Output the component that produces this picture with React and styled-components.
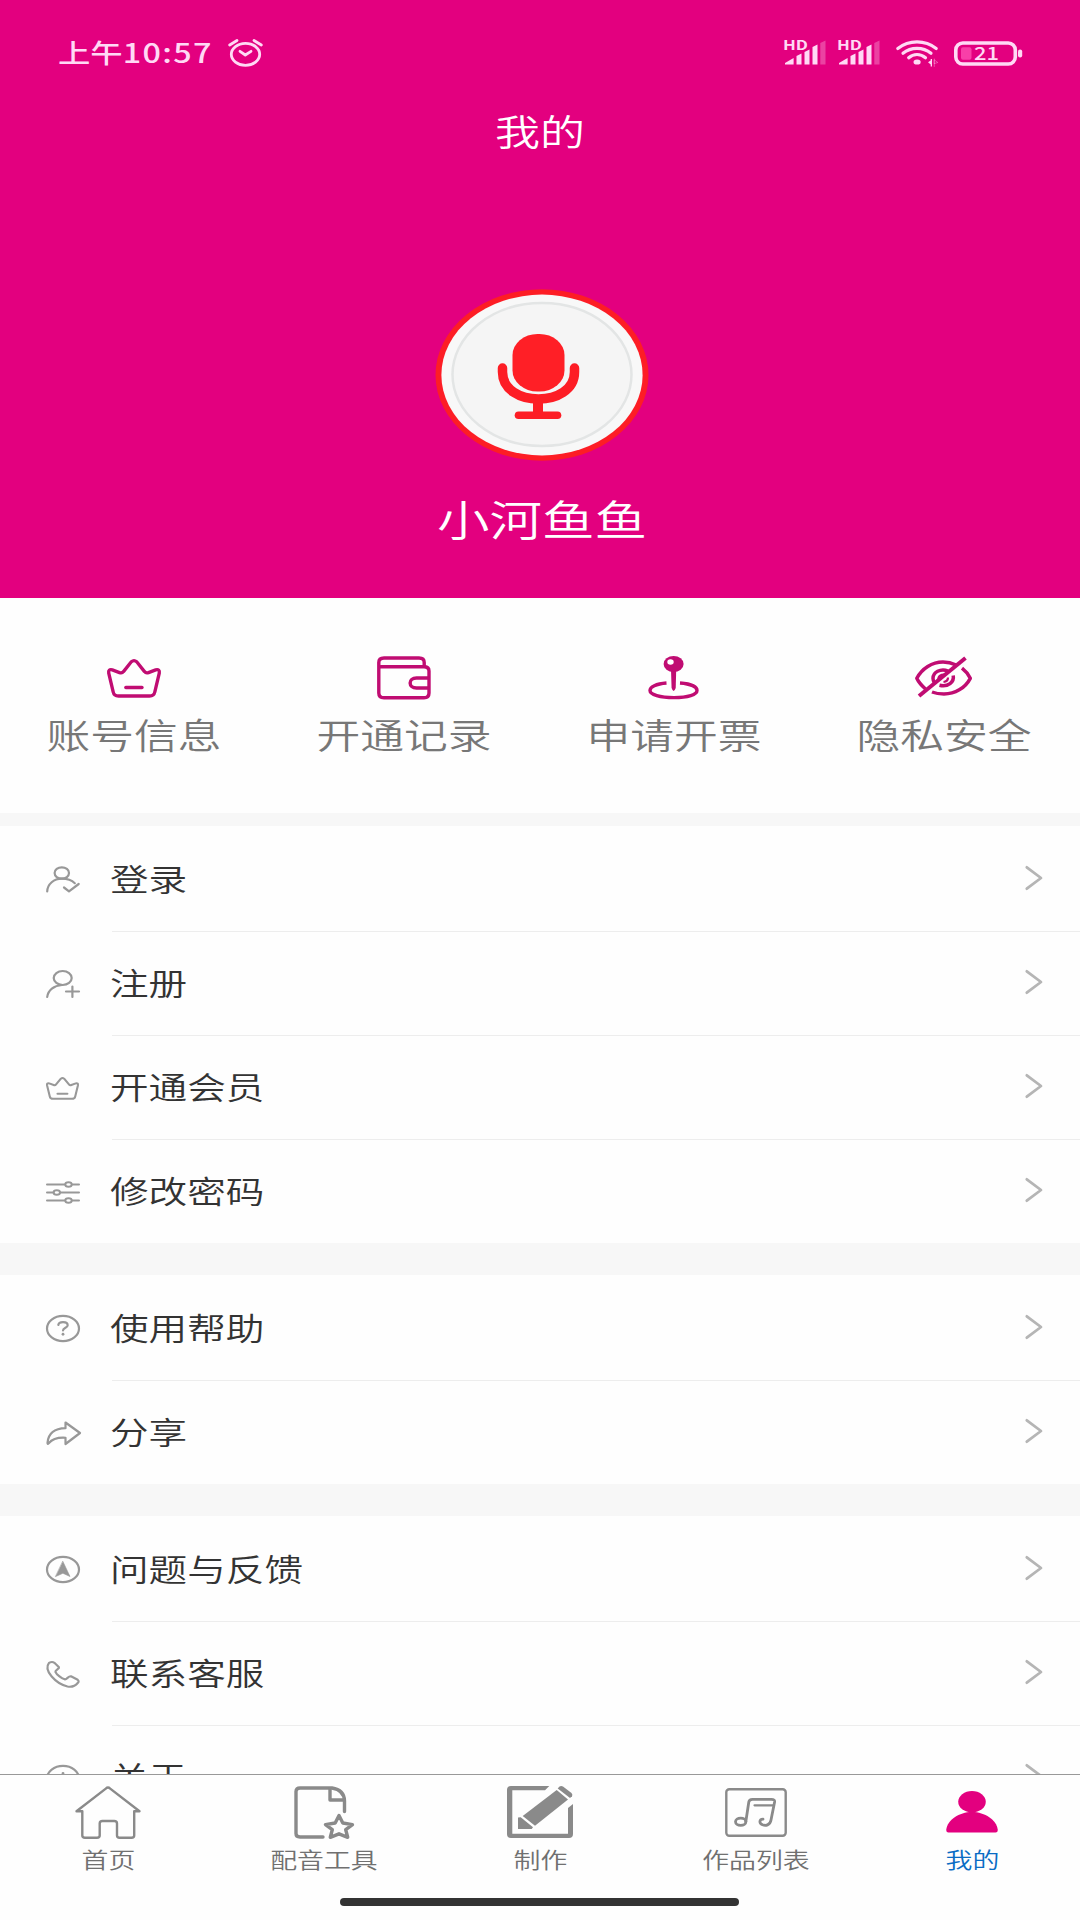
import React from 'react';
import styled, { createGlobalStyle } from 'styled-components'

const GlobalStyle = createGlobalStyle`
  * {
    box-sizing: border-box;
  }
  body {
    margin: 0;
    background: #fff;
    font-family: "Noto Sans CJK SC", "Noto Sans", sans-serif;
  }
  svg {
    display: block;
    flex: none;
  }
`

const Page = styled.div`
  width: 1080px;
  height: 1920px;
  display: flex;
  flex-direction: column;
  overflow: hidden;
  background: #fefefe;
`

// the whole app is drawn with wide glyphs
const Wide = styled.span`
  display: inline-block;
  white-space: nowrap;
  line-height: 1;
  transform: scaleX(1.25);
  transform-origin: ${p => p.$origin || 'center'};
`

const Header = styled.header`
  height: 598px;
  flex: none;
  display: flex;
  flex-direction: column;
  align-items: center;
  background: #e3007f;
  color: #fff;
`

const StatusBar = styled.div`
  width: 100%;
  height: 106px;
  padding: 0 58px 0 58px;
  display: flex;
  align-items: center;
  justify-content: space-between;
  color: #ffd9f5;
`

const StatusLeft = styled.div`
  display: flex;
  align-items: center;
`

const Time = styled(Wide)`
  width: 170px;
  margin-top: -2px;
  font-size: 26.5px;
  font-weight: 500;
  transform: scaleX(1.22);
  span {
    letter-spacing: 1.1px;
  }
`

const StatusRight = styled.div`
  display: flex;
  align-items: center;
  gap: 13px;
`

const WifiBox = styled.div`
  margin: 0 3px;
`

const Title = styled(Wide)`
  margin-top: 6px;
  font-size: 36px;
  font-weight: 350;
`

const Avatar = styled.div`
  margin: 141px 0 0 4px;
`

const Name = styled(Wide)`
  margin-top: 36px;
  margin-left: 4px;
  font-size: 42px;
  font-weight: 350;
`

const QuickNav = styled.nav`
  height: 215px;
  flex: none;
  display: grid;
  grid-template-columns: repeat(4, 270px);
`

const QuickItem = styled.div`
  padding-right: 2px;
  display: flex;
  flex-direction: column;
  align-items: center;
  color: #777;
  font-size: 35px;
  font-weight: 350;
`

const QuickIcon = styled.div`
  height: 104px;
  margin-bottom: 14px;
  display: flex;
  align-items: flex-end;
  color: #c00c72;
  svg {
    margin-bottom: ${p => p.$lift || 0}px;
  }
`

const Content = styled.main`
  flex: 1;
  min-height: 0;
  overflow: hidden;
  background: #f7f7f7;
`

const Group = styled.section`
  margin-top: ${p => p.$gap}px;
  background: #fefefe;
`

const Row = styled.div`
  height: 104px;
  display: flex;
  align-items: stretch;
  &:first-child {
    height: 105px;
  }
`

const RowIcon = styled.div`
  width: 112px;
  padding: 2px 0 0 46px;
  display: flex;
  align-items: center;
  color: #989898;
`

const RowBody = styled.div`
  flex: 1;
  padding-right: 37px;
  display: flex;
  align-items: center;
  justify-content: space-between;
  border-top: 1px solid ${p => (p.$first ? 'transparent' : '#ededed')};
  color: #333;
  font-size: 31px;
  font-weight: 350;
`

const RowLabel = styled(Wide)`
  margin: 0 0 4px -2px;
  transform: scaleX(1.245);
`

const ChevronBox = styled.div`
  margin-bottom: 3px;
`

const TabBar = styled.footer`
  height: 146px;
  flex: none;
  display: flex;
  flex-direction: column;
  align-items: center;
  border-top: 1px solid #999;
  background: #fefefe;
`

const Tabs = styled.div`
  width: 100%;
  height: 123px;
  padding-top: 1px;
  display: grid;
  grid-template-columns: repeat(5, 216px);
`

const Tab = styled.div`
  display: flex;
  flex-direction: column;
  align-items: center;
  font-size: 21.5px;
  font-weight: 350;
  color: ${p => (p.$active ? '#0a6cc4' : '#707070')};
`

const TabIcon = styled.div`
  height: 72px;
  display: flex;
  align-items: center;
  color: ${p => (p.$active ? '#e3007f' : '#8a8a8a')};
`

const TabLabel = styled(Wide)`
  margin-left: 1px;
`

const HomeIndicator = styled.div`
  width: 399px;
  height: 8px;
  margin-right: 1px;
  border-radius: 4px;
  background: #333;
`

const Icon = ({ w, h, sw = 2.2, children, view }) => (
  <svg
    width={w}
    height={h}
    viewBox={view || `0 0 ${w} ${h}`}
    preserveAspectRatio="none"
    fill="none"
    stroke="currentColor"
    strokeWidth={sw}
    strokeLinecap="round"
    strokeLinejoin="round"
    overflow="visible"
  >
    {children}
  </svg>
)

const AlarmIcon = () => (
  <Icon w={35} h={28} sw={2.8}>
    <ellipse cx="17.5" cy="15.3" rx="14.2" ry="11" />
    <path d="M1.7 6 9 1.5M33.3 6 26 1.5" />
    <path d="M12 12.3 17.3 16 23 12.3" />
  </Icon>
)

const SignalIcon = () => (
  <Icon w={41} h={26} sw={0}>
    <g fill="currentColor">
      <path d="M0 24.5V23L8.6 18V24.5z" />
      <path d="M11.5 24.5V16L16.5 13.5V24.5z" />
      <path d="M19.5 24.5V12L24.5 9.5V24.5z" />
      <path d="M27.5 24.5V7L32.5 4.5V24.5z" />
      <path d="M35.3 24.5V3L40.5 .5V24.5z" opacity="0.3" />
      <text x="-2" y="10" fontSize="13" fontWeight="700" textLength="25" lengthAdjust="spacingAndGlyphs">HD</text>
    </g>
  </Icon>
)

const WifiIcon = () => (
  <Icon w={42} h={26} sw={3.2}>
    <path d="M1.8 8.6C13 -.3 29 -.3 40.2 8.6" />
    <path d="M7 13.3C15 6.7 27 6.7 35 13.3" />
    <path d="M12.7 17.7C17.5 13.4 24.5 13.4 29.5 17.7" />
    <ellipse cx="21.1" cy="22" rx="3.6" ry="2.6" fill="currentColor" stroke="none" />
    <path d="M36 19v7.5h-1.3V24.5L32 22.3 34.7 20.5V19z" fill="currentColor" stroke="none" />
    <path d="M38.3 19v7.5M38.5 20l3.3 2.5-3.3 1z" strokeWidth="1" opacity="0.35" />
  </Icon>
)

const BatteryIcon = () => (
  <Icon w={68} h={25} sw={3.6}>
    <rect x="1.8" y="2" width="59.5" height="21" rx="7" />
    <rect x="7" y="6.3" width="10.5" height="12.4" rx="2" fill="#f83fa8" stroke="none" />
    <rect x="64" y="8.6" width="4.2" height="8" rx="2" fill="currentColor" stroke="none" />
    <text x="20" y="19.3" fontSize="18" fontWeight="500" textLength="25" lengthAdjust="spacingAndGlyphs" fill="currentColor" stroke="none">21</text>
  </Icon>
)

const AvatarIcon = () => (
  <Icon w={214} h={172} sw={0}>
    <ellipse cx="107" cy="86" rx="106.5" ry="85.7" fill="#fd1d25" />
    <ellipse cx="107" cy="86" rx="100.6" ry="80.4" fill="#f8f8f8" />
    <ellipse cx="107" cy="85.5" rx="89.5" ry="71.5" fill="#f5f5f5" stroke="#e3e5e5" strokeWidth="2.5" />
    <rect x="77.5" y="45" width="52" height="57.5" rx="25" ry="21" fill="#ff1f26" />
    <path d="M67.5 79V83C67.5 119 139.5 119 139.5 83V79" stroke="#fd1d25" strokeWidth="9.5" />
    <path d="M103 110V126" stroke="#fd1d25" strokeWidth="10" strokeLinecap="butt" />
    <path d="M83.5 126.2H122.5" stroke="#fd1d25" strokeWidth="7.6" />
  </Icon>
)

const CrownIcon = ({ small }) => (
  <Icon w={small ? 33 : 54} h={small ? 23 : 39} sw={small ? 3.4 : 3.3} view="0 0 54 39">
    <path d="M24.3 2.8Q27 .5 29.7 2.8L37.5 12.6Q39 14.6 41.5 13.6L48.7 10.9Q53 10 52.3 14L47.8 33Q47 37 42.5 37H11.5Q7 37 6.2 33L1.7 14Q1 10 5.3 10.9L12.5 13.6Q15 14.6 16.5 12.6z" />
    <path d="M18.8 28.5H35" />
  </Icon>
)

const WalletIcon = () => (
  <Icon w={54} h={44} sw={3.4}>
    <path d="M47.2 10.5V6.5Q47.2 2 42 2H7Q1.8 2 1.8 6.5V37Q1.8 41.8 7 41.8H47Q52 41.8 52 37V15Q52 10.8 47 10.8H4" />
    <path d="M51 22H39.5C31 22 31 32 39.5 32H51" />
  </Icon>
)

const PinIcon = () => (
  <Icon w={52} h={44} sw={0}>
    <path d="M23 14H28.2L27.7 32Q25.6 38 23.6 32z" fill="currentColor" />
    <ellipse cx="25.6" cy="8" rx="10" ry="8" fill="currentColor" />
    <ellipse cx="22.5" cy="6" rx="3.2" ry="2.7" fill="#fff" />
    <path d="M18.5 27C8 27.8 2 31 2 34.5C2 38.6 12 41.6 26 41.6S49 38.6 49 34.5C49 31 43 27.8 32 27" strokeWidth="3.4" strokeLinecap="butt" />
  </Icon>
)

const EyeOffIcon = () => (
  <Icon w={58} h={42} sw={3.5}>
    <path d="M10.5 33C6.5 29.5 3.5 26 1.8 22.3C7 12.5 17 6 28 6Q35 6 40.5 8.7" strokeLinecap="butt" />
    <path d="M47 12.2Q52.5 16.5 55.3 22.3C50 32.2 40 38 29 38Q22 38 17 36" strokeLinecap="butt" />
    <path d="M33 15C25.5 11.8 17.8 16.5 18 22.5Q18.1 25 19.5 27" strokeLinecap="butt" />
    <path d="M38.2 19.5C39.5 26 33 31.3 24.5 29.3" strokeLinecap="butt" />
    <path d="M31 19C26 17.8 22.8 20.5 23.5 24M33 21.5Q33 25.5 28.5 26" strokeWidth="2.2" strokeLinecap="butt" />
    <path d="M4 40 50.5 2" strokeLinecap="butt" strokeWidth="4" />
  </Icon>
)

const UserCheckIcon = () => (
  <Icon w={34} h={27}>
    <ellipse cx="15.8" cy="7" rx="7.2" ry="5.7" />
    <path d="M1.2 25.5C1.5 18 8 12.7 15.8 12.7C21.5 12.7 26 14.5 28.8 17.2" />
    <path d="M18 21.5 23 25.3 32.7 18" />
  </Icon>
)

const UserPlusIcon = () => (
  <Icon w={34} h={28}>
    <ellipse cx="16.7" cy="8" rx="9" ry="7" />
    <path d="M1.2 27C2 20 8 15.5 16 15" />
    <path d="M20 21.5H33M26.4 16.5V27" />
  </Icon>
)

const SlidersIcon = () => (
  <Icon w={34} h={23} sw={2}>
    <path d="M1 3.5H19M26 3.5H33M1 11.5H7.5M14 11.5H33M1 19.5H19M26 19.5H33" />
    <ellipse cx="22.5" cy="3.5" rx="3.2" ry="2.2" />
    <ellipse cx="10.8" cy="11.5" rx="3.2" ry="2.2" />
    <ellipse cx="22.5" cy="19.5" rx="3.2" ry="2.2" />
  </Icon>
)

const HelpIcon = () => (
  <Icon w={34} h={27}>
    <ellipse cx="17" cy="13.5" rx="16" ry="12.6" />
    <path d="M12.3 10C12.8 6.2 21.5 6.2 21.7 10.2C21.7 12.7 17 12.7 17 15.5" />
    <path d="M17 19.2V19.3" strokeWidth="2.8" />
  </Icon>
)

const ShareIcon = () => (
  <Icon w={35} h={25}>
    <path d="M19.5 1.5 34 12 19.5 23V16.8C11.5 16.3 6.5 17.8 2.7 22.3C1.8 23.2 1.5 22.8 1.5 21.8C2.3 13 8.5 7.5 19.5 7.2z" />
  </Icon>
)

const CompassIcon = () => (
  <Icon w={34} h={27}>
    <ellipse cx="17" cy="13.5" rx="16" ry="12.6" />
    <path d="M16.9 5.5 24 20.5 16.9 17.3 9.7 20.5z" fill="currentColor" strokeWidth="0.6" />
  </Icon>
)

const PhoneIcon = () => (
  <Icon w={34} h={27}>
    <path d="M3 1.9C5 .8 7 .8 8.4 1.8L13 6.2C13.7 7.6 9.2 9 9.4 10.8C10.5 13.5 16 18 19 18.4C21 18.5 22.5 14.8 25 15.3L31.7 18.8C33 19.8 32.8 20.8 31.7 22C29.5 24.8 26 26.3 21.5 25.5C10 22.8 -3 9.5 3 1.9z" />
  </Icon>
)

const InfoIcon = () => (
  <Icon w={34} h={27}>
    <ellipse cx="17" cy="13.5" rx="16" ry="12.6" />
    <path d="M17 8.3V8.4" strokeWidth="2.8" />
    <path d="M17 12.5V20" />
  </Icon>
)

const ChevronIcon = () => (
  <Icon w={18} h={26} sw={2.8}>
    <path d="M1.8 2.3 16 13 1.8 23.7" stroke="#b5b5b5" />
  </Icon>
)

const HomeIcon = () => (
  <Icon w={66} h={53} sw={2.4}>
    <path d="M30.8 2.6Q33 .6 35.2 2.6L64.5 25.2H59.2V49.5Q59.2 51.7 56.5 51.7H44.5Q42 51.7 42 49.5V37.5Q42 35 39.2 35H27.5Q24.7 35 24.7 37.5V49.5Q24.7 51.7 22 51.7H10Q7.3 51.7 7.3 49.5V25.2H1.5z" />
  </Icon>
)

const FileStarIcon = () => (
  <Icon w={61} h={53} sw={3.4}>
    <path d="M29 51H6Q2 51 2 47.5V5.5Q2 2 6 2H38Q50.3 4 50.5 15V25.5" />
    <path d="M36 3V14H50" />
    <path d="M45 29.5 48.8 37 58.5 38.6 51.7 43.7 53.7 51.3 45 47.8 36.3 51.3 38.3 43.7 31.5 38.6 41.2 37z" />
  </Icon>
)

const EditIcon = () => (
  <Icon w={66} h={52} sw={0}>
    <g fill="currentColor">
      <path d="M42.3 0H4Q0 0 0 4V48Q0 52 4 52H62Q66 52 66 48V18L61 22V47.8H5.3V4.2H38z" />
      <path d="M49.7 4 61 13.5 28 39.7 15.7 30z" />
      <path d="M11 31.5 13.7 31.2 26 41.3 24.7 43H11z" />
      <path d="M50.7 2.6 52.5 .6Q54 -.5 56 .6L64.5 7Q66 9 65 10.3L63 12z" />
    </g>
  </Icon>
)

const MusicIcon = () => (
  <Icon w={62} h={49} sw={2.8}>
    <rect x="1.3" y="1.3" width="59.4" height="46.4" rx="3" strokeWidth="2.4" />
    <ellipse cx="15.7" cy="33.7" rx="5.2" ry="3.6" />
    <path d="M20.8 33.7 23.8 14Q24.2 11.3 27.5 11.3H46.5Q50 11.3 49.6 14L46 32C45 37.5 40.5 38 37.5 36.8C34 35.2 34 31.5 38 31.2" />
    <path d="M29.5 17.3H48.5" strokeWidth="2.2" />
  </Icon>
)

const UserIcon = () => (
  <Icon w={52} h={42} sw={0}>
    <g fill="currentColor">
      <ellipse cx="26" cy="10.7" rx="13.8" ry="10.7" />
      <path d="M2.5 41.5Q0 41.5 .3 38.5C1.5 29 13 21 26 21S50.5 29 51.7 38.5Q52 41.5 49.5 41.5z" />
    </g>
  </Icon>
)

const quickItems = [
  { label: '账号信息', icon: <CrownIcon />, lift: 4 },
  { label: '开通记录', icon: <WalletIcon />, lift: 2 },
  { label: '申请开票', icon: <PinIcon />, lift: 2 },
  { label: '隐私安全', icon: <EyeOffIcon />, lift: 4 },
]

const groups = [
  {
    gap: 13,
    rows: [
      { label: '登录', icon: <UserCheckIcon /> },
      { label: '注册', icon: <UserPlusIcon /> },
      { label: '开通会员', icon: <CrownIcon small /> },
      { label: '修改密码', icon: <SlidersIcon /> },
    ],
  },
  {
    gap: 32,
    rows: [
      { label: '使用帮助', icon: <HelpIcon /> },
      { label: '分享', icon: <ShareIcon /> },
    ],
  },
  {
    gap: 32,
    rows: [
      { label: '问题与反馈', icon: <CompassIcon /> },
      { label: '联系客服', icon: <PhoneIcon /> },
      { label: '关于', icon: <InfoIcon /> },
    ],
  },
]

const tabs = [
  { label: '首页', icon: <HomeIcon /> },
  { label: '配音工具', icon: <FileStarIcon /> },
  { label: '制作', icon: <EditIcon /> },
  { label: '作品列表', icon: <MusicIcon /> },
  { label: '我的', icon: <UserIcon />, active: true },
]

function App() {
  return <Page>
    <GlobalStyle />
    <Header>
      <StatusBar>
        <StatusLeft>
          <Time $origin="left">上午<span>10:57</span></Time>
          <AlarmIcon />
        </StatusLeft>
        <StatusRight>
          <SignalIcon />
          <SignalIcon />
          <WifiBox><WifiIcon /></WifiBox>
          <BatteryIcon />
        </StatusRight>
      </StatusBar>
      <Title>我的</Title>
      <Avatar><AvatarIcon /></Avatar>
      <Name>小河鱼鱼</Name>
    </Header>
    <QuickNav>
      {quickItems.map(item => (
        <QuickItem key={item.label}>
          <QuickIcon $lift={item.lift}>{item.icon}</QuickIcon>
          <Wide>{item.label}</Wide>
        </QuickItem>
      ))}
    </QuickNav>
    <Content>
      {groups.map((group, i) => (
        <Group key={i} $gap={group.gap}>
          {group.rows.map((row, j) => (
            <Row key={row.label}>
              <RowIcon>{row.icon}</RowIcon>
              <RowBody $first={j === 0}>
                <RowLabel $origin="left">{row.label}</RowLabel>
                <ChevronBox><ChevronIcon /></ChevronBox>
              </RowBody>
            </Row>
          ))}
        </Group>
      ))}
    </Content>
    <TabBar>
      <Tabs>
        {tabs.map(tab => (
          <Tab key={tab.label} $active={tab.active}>
            <TabIcon $active={tab.active}>{tab.icon}</TabIcon>
            <TabLabel>{tab.label}</TabLabel>
          </Tab>
        ))}
      </Tabs>
      <HomeIndicator />
    </TabBar>
  </Page>
}
export default App;
